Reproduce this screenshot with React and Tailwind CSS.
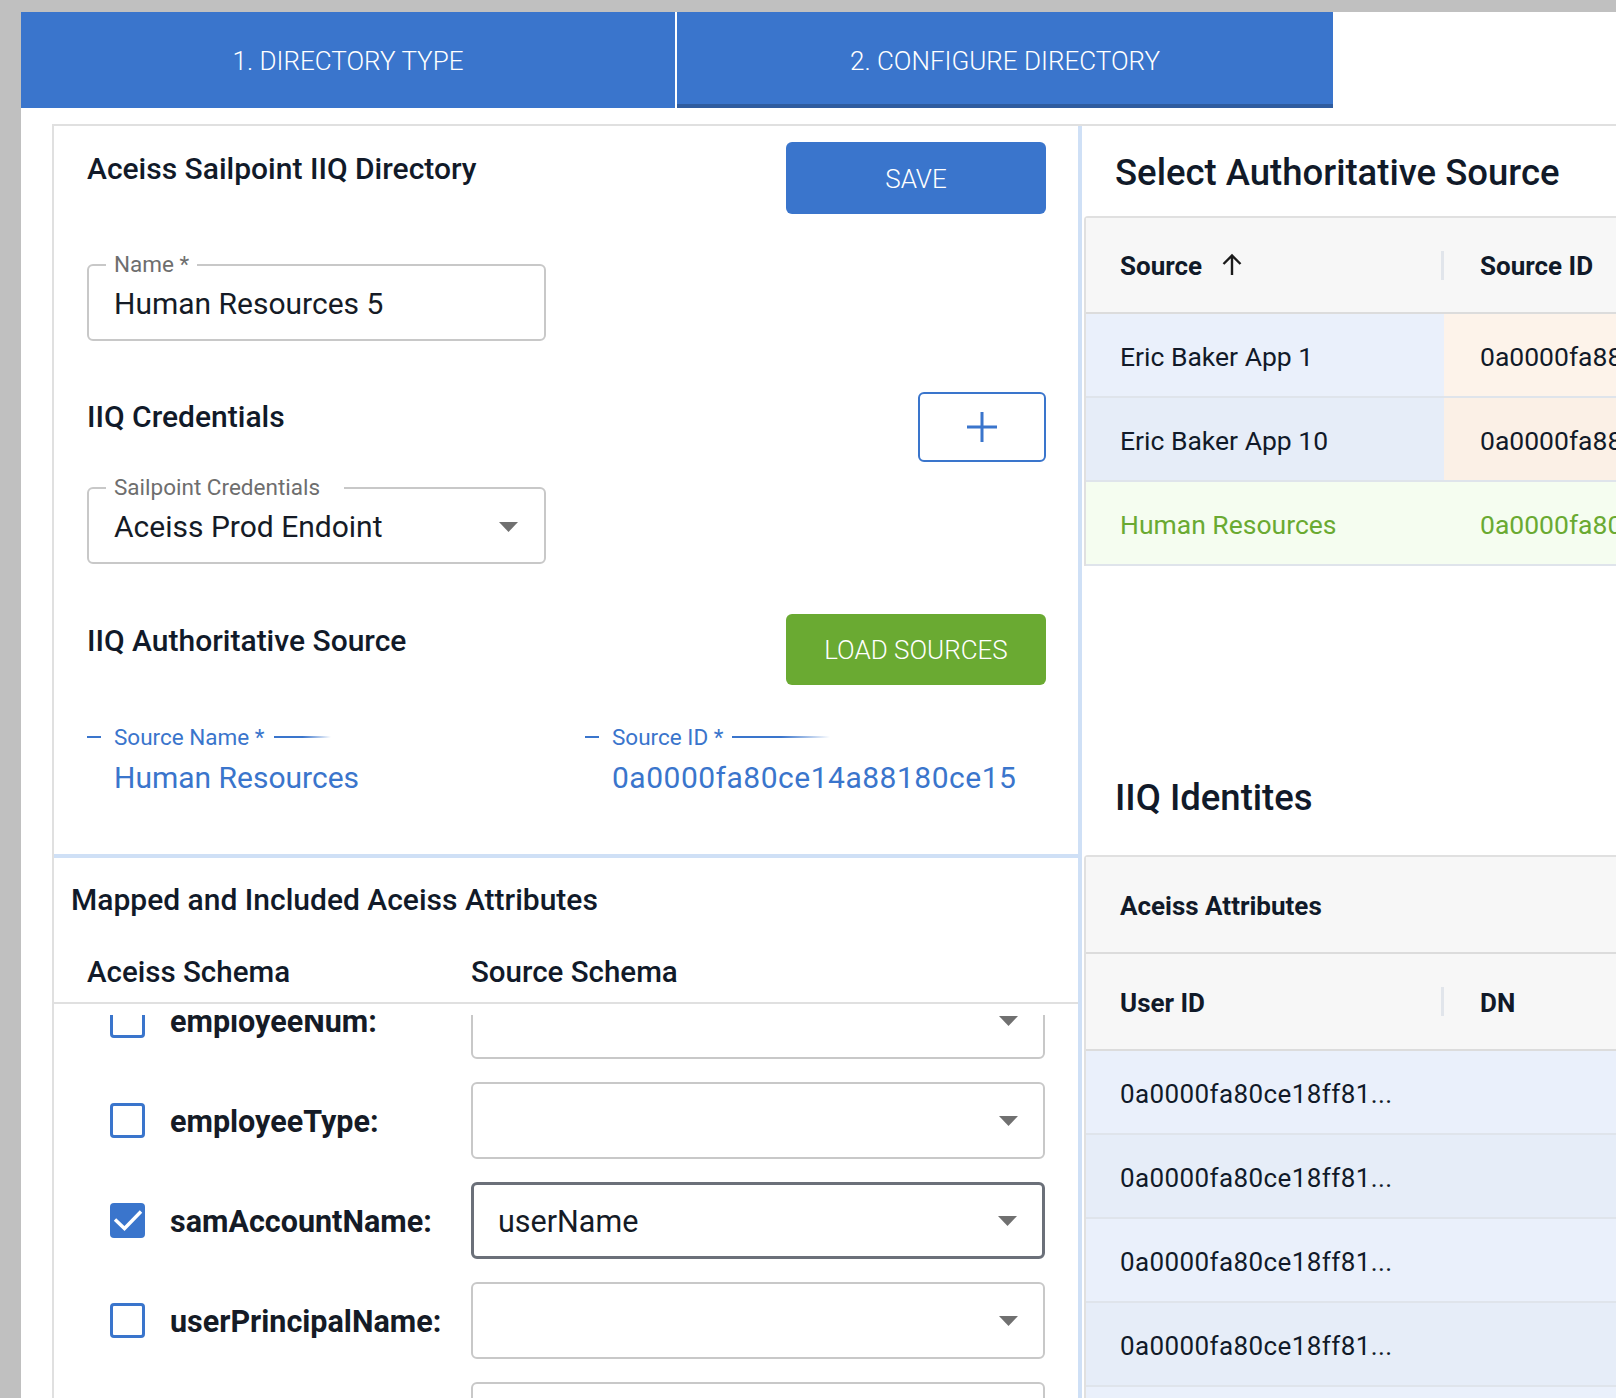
import React from 'react';

const BLUE = '#3a75cc';

function Caret() {
  return (
    <svg width="19" height="10" viewBox="0 0 19 10" className="block">
      <path d="M0 0 H19 L9.5 10 Z" fill="#707070" />
    </svg>
  );
}

function Checkbox({ checked }) {
  if (checked) {
    return (
      <div className="w-[35px] h-[35px] rounded-[4px] bg-[#3a75cc] shrink-0">
        <svg width="35" height="35" viewBox="0 0 35 35" className="block">
          <path d="M5 16.5 L14.5 25.5 L31 8.5" stroke="white" strokeWidth="3.4" fill="none" />
        </svg>
      </div>
    );
  }
  return <div className="w-[35px] h-[35px] rounded-[4px] border-[3px] border-[#3a75cc] bg-white shrink-0" />;
}

function OutlinedField({ label, value, select, labelPad = 'pr-[8px]' }) {
  return (
    <div className="relative w-[459px] h-[77px] border-2 border-[#c8c8c8] rounded-[6px] flex items-center pl-[25px]">
      <span className={`absolute top-[-15px] left-[17px] pl-[8px] ${labelPad} bg-white text-[22.5px] leading-[26px] text-[#6e6e6e]`}>
        {label}
      </span>
      <span className="pt-[3px] text-[30px] leading-[34px] text-[#151b26]">{value}</span>
      {select && (
        <span className="absolute right-[26px] top-[33px]">
          <Caret />
        </span>
      )}
    </div>
  );
}

function SourceField({ label, value, lineW, wide }) {
  return (
    <div>
      <div className="flex items-center h-[24px]">
        <span className="w-[14px] h-[2px] bg-[#3a75cc]" />
        <span className="ml-[13px] text-[22.5px] leading-[24px] text-[#3a75cc]">{label}</span>
        <span className={`ml-[9px] ${lineW} h-[2px] bg-linear-to-r from-[#3a75cc] from-50% to-transparent`} />
      </div>
      <div className={`mt-[12px] pl-[27px] text-[30px] leading-[34px] text-[#3a75cc] ${wide ? 'tracking-[0.5px]' : ''}`}>{value}</div>
    </div>
  );
}

function MapRow({ label, checked, value, focused }) {
  return (
    <div className="flex items-center h-[77px] pl-[56px]">
      <Checkbox checked={checked} />
      <div className="ml-[25px] w-[301px] pt-[3px] text-[30.5px] leading-[34px] font-bold text-[#151b26]">{label}</div>
      <div
        className={`relative w-[574px] h-[77px] rounded-[6px] flex items-center ${
          focused ? 'border-[3px] border-[#6b7079] pl-[24px]' : 'border-2 border-[#c8c8c8] pl-[25px]'
        }`}
      >
        <span className="pt-[3px] text-[30.5px] leading-[34px] text-[#151b26]">{value}</span>
        <span className="absolute right-[25px] top-1/2 -translate-y-1/2">
          <Caret />
        </span>
      </div>
    </div>
  );
}

function HeaderDivider() {
  return <div className="w-[3px] h-[29px] bg-[#e1e5eb] shrink-0" />;
}

export default function App() {
  const identities = ['#eaf0fb', '#e6edf8', '#eaf0fb', '#e6edf8', '#eaf0fb'];
  return (
    <div className="h-[1398px] overflow-hidden bg-[#c0c0c0] pt-[12px] pl-[21px] font-[Roboto,'Noto_Sans',sans-serif] text-[#111a29]">
      <div className="bg-white h-[1386px] overflow-hidden">
        {/* Tabs */}
        <div className="flex h-[96px]">
          <div className="w-[654px] bg-[#3a75cc] pt-[2px] flex items-center justify-center text-white text-[26px] font-light">
            1. DIRECTORY TYPE
          </div>
          <div className="w-[2px]" />
          <div className="w-[656px] bg-[#3a75cc] border-b-[4px] border-[#2f5c9f] pt-[6px] flex items-center justify-center text-white text-[26px] font-light">
            2. CONFIGURE DIRECTORY
          </div>
        </div>

        {/* Body */}
        <div className="mt-[16px] ml-[31px] border-t-2 border-l-2 border-[#e0e0e0] flex h-[1274px]">
          {/* Left panel */}
          <div className="w-[1024px] shrink-0 flex flex-col">
            <div className="pl-[33px] pr-[32px] pt-[16px]">
              <div className="flex justify-between items-start">
                <h2 className="mt-[9px] text-[30px] leading-[36px] font-medium">Aceiss Sailpoint IIQ Directory</h2>
                <button className="w-[260px] h-[72px] pt-[2px] rounded-[6px] bg-[#3a75cc] text-white text-[26px] font-light">SAVE</button>
              </div>
              <div className="mt-[50px]">
                <OutlinedField label="Name *" value="Human Resources 5" />
              </div>
              <div className="mt-[51px] flex justify-between items-start">
                <h2 className="mt-[7px] text-[30px] leading-[36px] font-medium">IIQ Credentials</h2>
                <button className="w-[128px] h-[70px] rounded-[6px] border-2 border-[#3a75cc] bg-white flex items-center justify-center">
                  <svg width="32" height="32" viewBox="0 0 32 32">
                    <path d="M16 1 V31 M1 16 H31" stroke={BLUE} strokeWidth="3" />
                  </svg>
                </button>
              </div>
              <div className="mt-[25px]">
                <OutlinedField label="Sailpoint Credentials" value="Aceiss Prod Endoint" select labelPad="pr-[24px]" />
              </div>
              <div className="mt-[50px] flex justify-between items-start">
                <h2 className="mt-[9px] text-[30px] leading-[36px] font-medium">IIQ Authoritative Source</h2>
                <button className="w-[260px] h-[71px] pt-[2px] rounded-[6px] bg-[#6aaa32] text-white text-[26px] font-light">LOAD SOURCES</button>
              </div>
              <div className="mt-[40px] flex pb-[59px]">
                <div className="w-[498px]">
                  <SourceField label="Source Name *" value="Human Resources" lineW="w-[57px]" />
                </div>
                <div>
                  <SourceField label="Source ID *" value="0a0000fa80ce14a88180ce15" lineW="w-[98px]" wide />
                </div>
              </div>
            </div>
            <div className="h-[4px] bg-[#cfe0f6]" />
            <div className="pl-[17px] pt-[25px]">
              <h2 className="text-[30px] leading-[34px] font-medium">Mapped and Included Aceiss Attributes</h2>
            </div>
            <div className="mt-[38px] pl-[33px] flex text-[29.5px] leading-[34px] font-medium">
              <div className="w-[384px]">Aceiss Schema</div>
              <div>Source Schema</div>
            </div>
            <div className="mt-[13px] h-[2px] bg-[#e0e0e0]" />
            <div className="mt-[11px] flex-1 overflow-hidden">
              <div className="mt-[-33px] flex flex-col gap-[23px]">
                <MapRow label="employeeNum:" />
                <MapRow label="employeeType:" />
                <MapRow label="samAccountName:" checked value="userName" focused />
                <MapRow label="userPrincipalName:" />
                <MapRow label="" />
              </div>
            </div>
          </div>

          {/* Divider */}
          <div className="w-[4px] shrink-0 bg-[#cfe0f6]" />

          {/* Right panel */}
          <div className="flex-1 min-w-0 overflow-hidden">
            <h2 className="pl-[33px] pt-[26px] text-[36.5px] leading-[42px] font-medium whitespace-nowrap">Select Authoritative Source</h2>
            <div className="mt-[22px] ml-[2px] w-[760px] border-t-2 border-l-2 border-[#e0e0e0] rounded-tl-[4px]">
              <div className="h-[96px] pt-[3px] bg-[#f7f7f7] border-b-2 border-[#dcdcdc] flex items-center text-[26px] font-bold">
                <div className="w-[355px] pl-[34px] flex items-center">
                  <span>Source</span>
                  <svg width="22" height="23" viewBox="0 0 22 23" className="ml-[19px] mb-[4px]">
                    <path d="M11 22 V2.5 M2.5 11 L11 2.5 L19.5 11" stroke="#1a1a1a" strokeWidth="2.4" fill="none" />
                  </svg>
                </div>
                <div className="mb-[3px]"><HeaderDivider /></div>
                <div className="pl-[36px]">Source ID</div>
              </div>
              {[
                { name: 'Eric Baker App 1', id: '0a0000fa8817e4a98188bd2f', a: '#eaf0fb', b: '#fdf3ea' },
                { name: 'Eric Baker App 10', id: '0a0000fa8817e4a98188be01', a: '#e6edf8', b: '#fbf0e6' },
              ].map((r) => (
                <div key={r.name} className="h-[84px] border-b-2 border-[#dfe4eb] flex text-[26.5px]">
                  <div className="w-[358px] pl-[34px] pt-[4px] flex items-center" style={{ background: r.a }}>
                    {r.name}
                  </div>
                  <div className="flex-1 pl-[36px] pt-[4px] flex items-center whitespace-nowrap" style={{ background: r.b }}>
                    {r.id}
                  </div>
                </div>
              ))}
              <div className="h-[84px] border-b-2 border-[#dfe4eb] flex text-[26.5px] bg-[#f5fdf0] text-[#6aaa32]">
                <div className="w-[358px] pl-[34px] pt-[4px] flex items-center">Human Resources</div>
                <div className="flex-1 pl-[36px] pt-[4px] flex items-center whitespace-nowrap">0a0000fa80ce14a88180ce15</div>
              </div>
            </div>

            <h2 className="mt-[211px] pl-[33px] text-[36.5px] leading-[42px] font-medium">IIQ Identites</h2>
            <div className="mt-[36px] ml-[2px] w-[760px] border-t-2 border-l-2 border-[#e0e0e0] rounded-tl-[4px]">
              <div className="h-[97px] pt-[4px] bg-[#f7f7f7] border-b-2 border-[#dcdcdc] flex items-center pl-[34px] text-[26px] font-bold">
                Aceiss Attributes
              </div>
              <div className="h-[97px] bg-[#f7f7f7] border-b-2 border-[#dcdcdc] flex items-center text-[26px] font-bold">
                <div className="w-[355px] pl-[34px] pt-[4px]">User ID</div>
                <HeaderDivider />
                <div className="pl-[36px] pt-[4px]">DN</div>
              </div>
              {identities.map((c, i) => (
                <div key={i} className="h-[84px] pt-[4px] border-b-2 border-[#dfe4eb] flex items-center pl-[34px] text-[26px] tracking-[0.4px]" style={{ background: c }}>
                  0a0000fa80ce18ff81...
                </div>
              ))}
            </div>
          </div>
        </div>
      </div>
    </div>
  );
}
